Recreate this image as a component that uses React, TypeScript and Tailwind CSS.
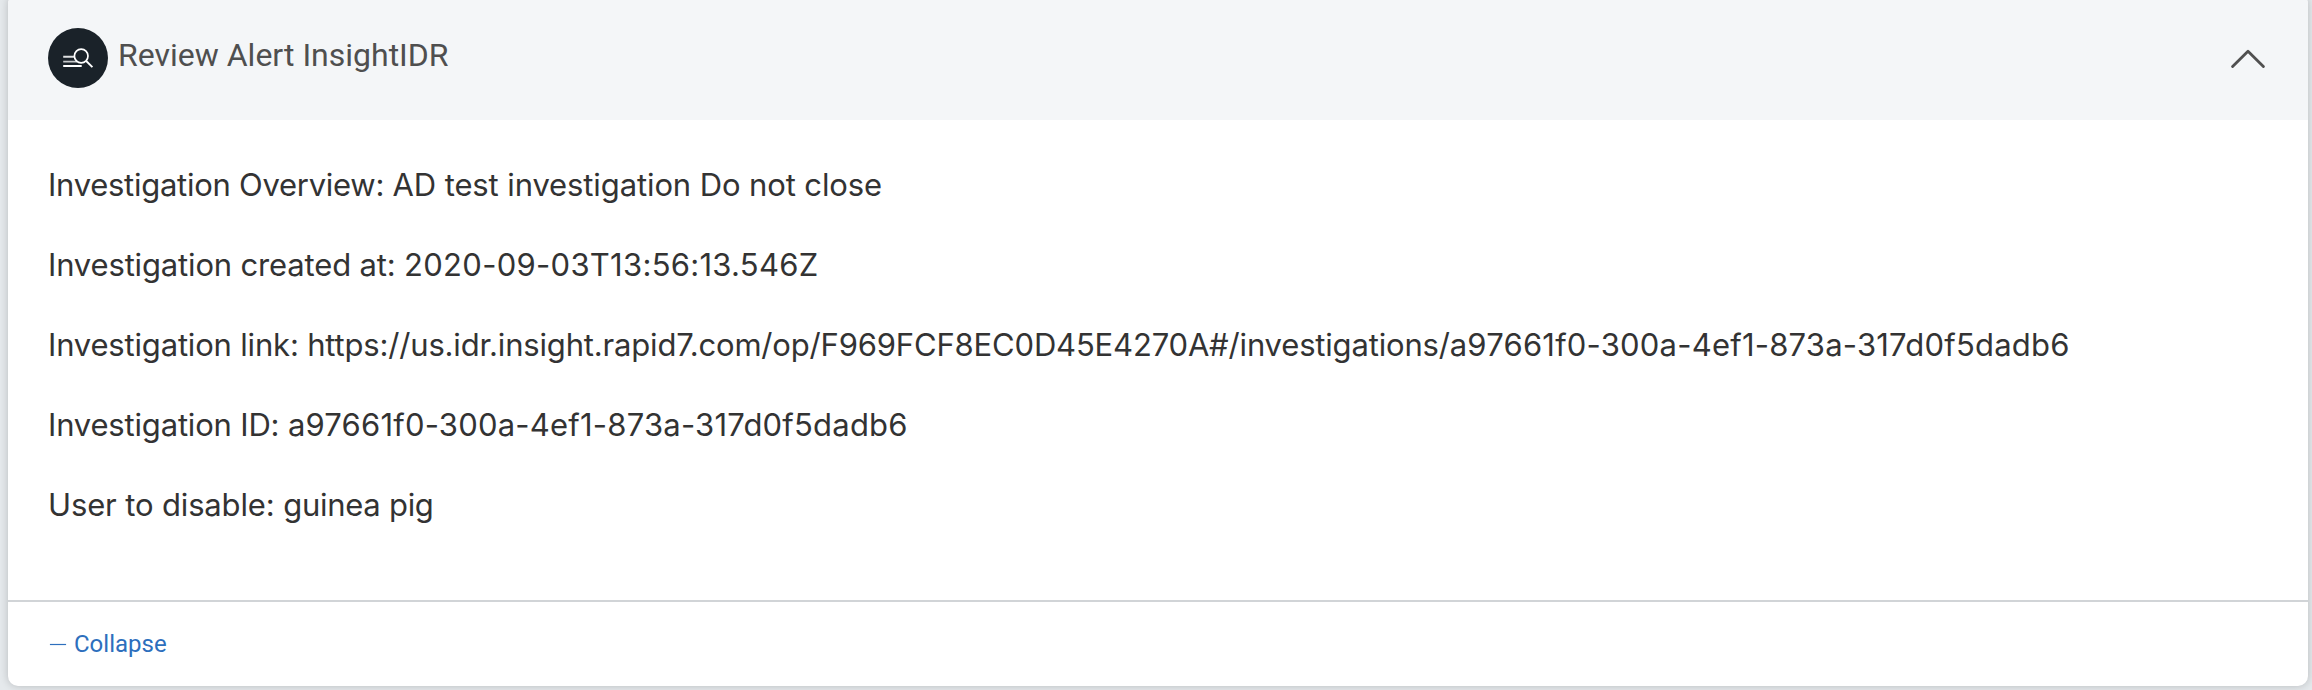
type Segment = { text: string; tracking: string };

const details: Segment[][] = [
  [
    { text: "Investigation Overview: ", tracking: "tracking-[-0.27px]" },
    { text: "AD test investigation Do not close", tracking: "tracking-[-0.11px]" },
  ],
  [
    { text: "Investigation created at: ", tracking: "tracking-[-0.16px]" },
    { text: "2020-09-03T13:56:13.546Z", tracking: "tracking-[0.28px]" },
  ],
  [
    { text: "Investigation link: ", tracking: "tracking-[-0.18px]" },
    { text: "https://us.idr.insight.rapid7.com/op/F969FCF8EC0D45E4270A#/investigations/", tracking: "tracking-[-0.175px]" },
    { text: "a97661f0-300a-4ef1-873a-317d0f5dadb6", tracking: "tracking-[0.21px]" },
  ],
  [
    { text: "Investigation ID: ", tracking: "tracking-[-0.18px]" },
    { text: "a97661f0-300a-4ef1-873a-317d0f5dadb6", tracking: "tracking-[0.21px]" },
  ],
  [
    { text: "User to disable: ", tracking: "tracking-[-0.14px]" },
    { text: "guinea pig", tracking: "tracking-[-0.27px]" },
  ],
];

function InsightIcon() {
  return (
    <svg className="size-[60px] shrink-0" viewBox="0 0 60 60" fill="none" aria-hidden="true">
      <circle cx="30" cy="30" r="30" fill="#1a2229" />
      <path d="M15.2 28.7H26" stroke="#dfe1e2" strokeWidth="1.9" />
      <path d="M15.2 33.6H29" stroke="#c5c8ca" strokeWidth="1.9" />
      <path d="M15.2 38H33.7" stroke="#fff" strokeWidth="2" />
      <circle cx="33.2" cy="28" r="6.8" fill="#1a2229" stroke="#fff" strokeWidth="1.7" />
      <path d="M38.2 33L44.4 39.2" stroke="#fff" strokeWidth="1.9" />
    </svg>
  );
}

export default function App() {
  return (
    <div className="h-[690px] w-full overflow-hidden bg-[#e5e9ec] pl-2 pr-1">
      <section className="-mt-1.5 flex h-[692px] flex-col overflow-hidden rounded-[10px] bg-white shadow-[0_0_8px_rgba(0,0,0,0.2)]">
        <header className="flex h-[126px] shrink-0 items-center justify-between bg-[#f4f6f8] pb-1 pl-10 pr-[43px] pt-1.5">
          <div className="flex items-center gap-2.5">
            <InsightIcon />
            <h1 className="-mt-1.5 whitespace-nowrap font-['Roboto',sans-serif] text-[32px] leading-10 text-[#4f4f4f]">
              Review Alert InsightIDR
            </h1>
          </div>
          <button type="button" aria-label="Collapse section">
            <svg className="block h-5 w-[34px]" viewBox="0 0 34 20" fill="none">
              <path d="M1.6 18.6L17 3.3L32.4 18.6" stroke="#505050" strokeWidth="2.8" strokeLinecap="round" strokeLinejoin="round" />
            </svg>
          </button>
        </header>
        <div className="flex h-[480px] shrink-0 flex-col gap-10 px-10 pt-[45px] font-['Inter',sans-serif] text-[31px] leading-10 text-[#333]">
          {details.map((segments, row) => (
            <p key={row} className="whitespace-nowrap">
              {segments.map((s) => (
                <span key={s.text} className={s.tracking}>
                  {s.text}
                </span>
              ))}
            </p>
          ))}
        </div>
        <footer className="flex grow items-center border-t-2 border-[#d1d4d7] pl-[42px]">
          <button type="button" className="flex items-center gap-2 font-['Roboto',sans-serif] text-2xl text-[#2d6fbd]">
            <span className="h-px w-4 bg-[#2d6fbd] shadow-[0_0_1px_#2d6fbd]" />
            Collapse
          </button>
        </footer>
      </section>
    </div>
  );
}
